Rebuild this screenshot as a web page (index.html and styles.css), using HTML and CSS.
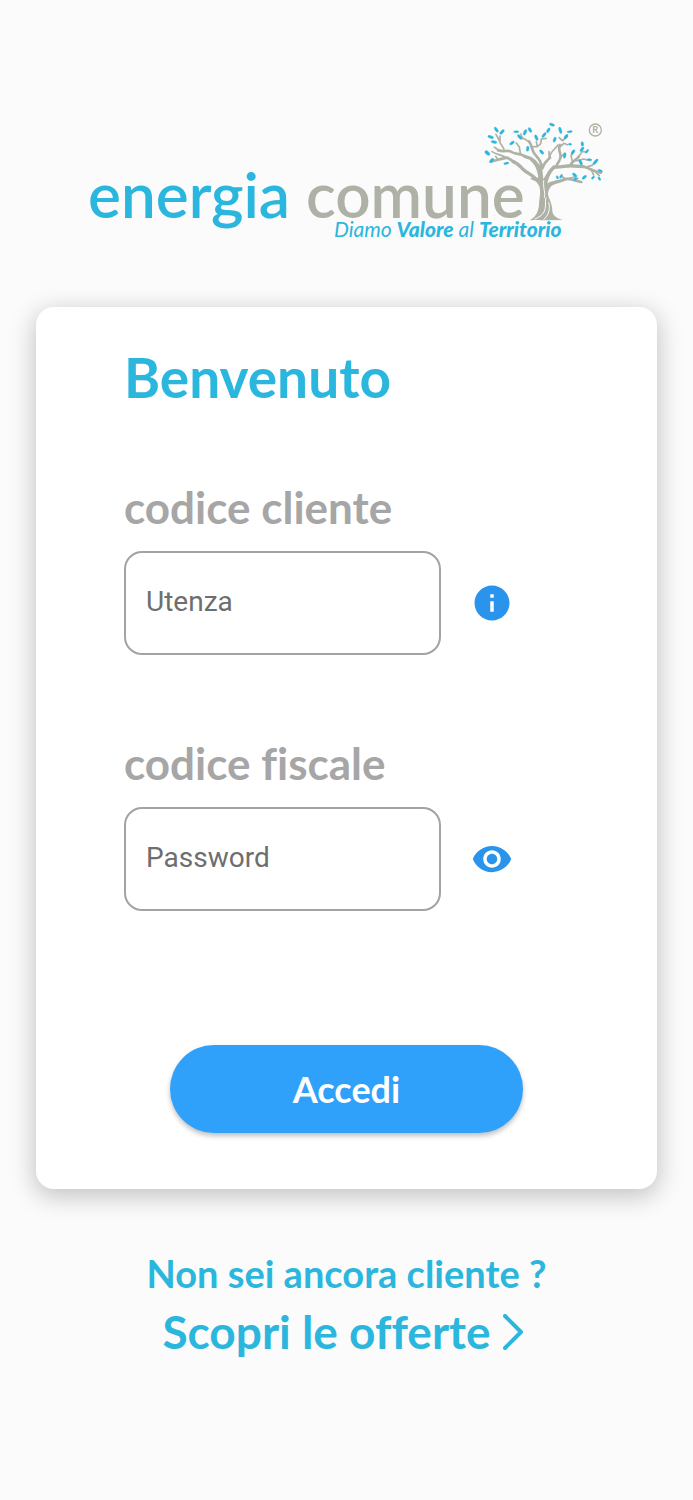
FILE: index.html
```html
<!DOCTYPE html>
<html lang="it">
<head>
  <meta charset="UTF-8" />
  <meta name="viewport" content="width=device-width, initial-scale=1.0"/>
  <title>Energia Comune - Accesso</title>
  <link rel="stylesheet" href="styles.css">
</head>
<body>

  <!-- Logo -->
  <header class="header">
    <svg class="logo" viewBox="0 0 514 120" role="img" aria-label="Energia Comune">
      <text class="logo-energia" x="-2" y="98">energia</text>
      <text class="logo-comune" x="216" y="98">comune</text>
      <text class="logo-tagline" x="244" y="117">Diamo <tspan class="strong">Valore</tspan> al <tspan class="strong">Territorio</tspan></text>

      <g transform="translate(380 -10) scale(.3333)">
        <!-- Trunk -->
        <path class="trunk" d="M179 331 C196 323 205 306 207 286 C208 262 214 246 207 226 C203 214 192 212 181 207 L184 203 C195 204 202 205 205 202 C202 180 196 165 180 150 L188 148 C202 158 211 170 217 179 L220 207 C229 196 235 176 249 168 L263 171 C244 181 237 200 232 221 C241 214 249 214 258 216 C240 228 234 241 234 254 C239 270 247 284 247 302 C248 318 261 325 280 330 L228 331 C215 331 205 328 179 331 Z"/>
        <path class="bark" d="M221 211 C219 238 227 246 223 263 M236 277 C242 298 235 316 221 329 M228 262 C224 280 230 292 222 306 C216 316 207 321 194 328"/>
        <!-- Branches -->
        <g class="branch">
          <path stroke-width="10" d="M209 221 C195 196 176 194 158 177 C147 165 142 159 129 155 M212 185 C204 157 187 144 164 139 M252 171 C278 173 290 164 312 168 L340 170 M237 227 C253 212 270 216 284 208"/>
          <path stroke-width="8" d="M164 139 C151 128 137 135 125 126 C115 118 104 128 84 121 M133 156 L112 143 L84 149 L62 155 M217 175 C222 157 232 151 240 143 M214 176 C216 155 205 145 194 132 C184 119 187 106 177 94 M258 171 C262 157 272 153 272 139 C270 122 263 115 270 105 M302 165 C306 151 320 151 326 140 M340 170 C358 173 368 185 393 188 M280 209 C296 200 310 213 334 216"/>
          <path stroke-width="5" d="M103 123 C102 108 91 107 89 93 L78 73 M90 95 L90 78 M86 120 L73 112 M105 141 C92 134 78 133 66 125 M84 149 L77 139 M151 130 L148 111 L139 99 M179 98 L166 88 L151 83 M182 109 C197 113 214 107 213 94 L214 87 L228 85 M202 110 L199 95 M240 143 C236 130 253 120 264 105 M238 146 L237 125 M269 111 L282 100 L292 104 M272 141 L285 129 M308 157 L303 137 L311 126 M326 141 L337 124 L348 126 M318 153 L341 147 L357 151 M346 172 L366 166 L372 160 M363 178 L371 195 M378 187 L388 197 M287 208 L276 199 M296 206 L314 201 M315 210 L324 205 M268 83 L276 91 L282 88 M278 92 L292 80 M152 72 L157 83"/>
        </g>
        <!-- Leaves -->
        <g class="leaves">
          <ellipse cx="79" cy="59" rx="9" ry="4" transform="rotate(55 79 59)"/>
          <ellipse cx="96" cy="66" rx="9" ry="4" transform="rotate(-45 96 66)"/>
          <ellipse cx="62" cy="81" rx="9" ry="4" transform="rotate(18 62 81)"/>
          <ellipse cx="72" cy="96" rx="9" ry="4" transform="rotate(8 72 96)"/>
          <ellipse cx="52" cy="129" rx="9" ry="5" transform="rotate(40 52 129)"/>
          <ellipse cx="65" cy="151" rx="8" ry="4" transform="rotate(-45 65 151)"/>
          <ellipse cx="109" cy="160" rx="8" ry="3" transform="rotate(-15 109 160)"/>
          <ellipse cx="126" cy="99" rx="8" ry="4" transform="rotate(-35 126 99)"/>
          <ellipse cx="139" cy="65" rx="8" ry="3"/>
          <ellipse cx="149" cy="81" rx="9" ry="4" transform="rotate(50 149 81)"/>
          <ellipse cx="165" cy="67" rx="9" ry="4" transform="rotate(-65 165 67)"/>
          <ellipse cx="180" cy="60" rx="8" ry="4" transform="rotate(60 180 60)"/>
          <ellipse cx="173" cy="116" rx="8" ry="4" transform="rotate(-85 173 116)"/>
          <ellipse cx="199" cy="83" rx="9" ry="4" transform="rotate(65 199 83)"/>
          <ellipse cx="222" cy="75" rx="9" ry="4" transform="rotate(-50 222 75)"/>
          <ellipse cx="235" cy="61" rx="8" ry="4" transform="rotate(-60 235 61)"/>
          <ellipse cx="246" cy="44" rx="8" ry="4" transform="rotate(20 246 44)"/>
          <ellipse cx="271" cy="61" rx="10" ry="4" transform="rotate(75 271 61)"/>
          <ellipse cx="299" cy="65" rx="8" ry="3" transform="rotate(-5 299 65)"/>
          <ellipse cx="288" cy="80" rx="8" ry="4" transform="rotate(-50 288 80)"/>
          <ellipse cx="254" cy="89" rx="8" ry="4" transform="rotate(-70 254 89)"/>
          <ellipse cx="215" cy="126" rx="8" ry="4" transform="rotate(45 215 126)"/>
          <ellipse cx="300" cy="103" rx="5" ry="3"/>
          <ellipse cx="284" cy="137" rx="8" ry="4" transform="rotate(-75 284 137)"/>
          <ellipse cx="309" cy="126" rx="8" ry="4" transform="rotate(-50 309 126)"/>
          <ellipse cx="337" cy="102" rx="7" ry="4" transform="rotate(80 337 102)"/>
          <ellipse cx="336" cy="118" rx="8" ry="4" transform="rotate(-50 336 118)"/>
          <ellipse cx="351" cy="124" rx="7" ry="3" transform="rotate(-50 351 124)"/>
          <ellipse cx="332" cy="157" rx="9" ry="4" transform="rotate(65 332 157)"/>
          <ellipse cx="359" cy="149" rx="7" ry="3" transform="rotate(10 359 149)"/>
          <ellipse cx="377" cy="155" rx="10" ry="4" transform="rotate(-50 377 155)"/>
          <ellipse cx="391" cy="182" rx="7" ry="3" transform="rotate(25 391 182)"/>
          <ellipse cx="369" cy="203" rx="6" ry="3" transform="rotate(-45 369 203)"/>
          <ellipse cx="388" cy="206" rx="6" ry="3" transform="rotate(55 388 206)"/>
          <ellipse cx="343" cy="202" rx="8" ry="4" transform="rotate(-40 343 202)"/>
          <ellipse cx="314" cy="195" rx="8" ry="4" transform="rotate(40 314 195)"/>
          <ellipse cx="316" cy="207" rx="6" ry="3" transform="rotate(-50 316 207)"/>
          <ellipse cx="273" cy="199" rx="7" ry="3" transform="rotate(-60 273 199)"/>
          <ellipse cx="262" cy="202" rx="5" ry="3" transform="rotate(70 262 202)"/>
        </g>
        <circle class="mark-ring" cx="376" cy="60" r="18"/>
        <text class="mark-letter" x="376" y="70">R</text>
      </g>
    </svg>
  </header>

  <!-- Login -->
  <main class="card">
    <h1 class="title">Benvenuto</h1>

    <form class="login-form">
      <div class="field">
        <label for="cliente">codice cliente</label>
        <div class="field-row">
          <input type="text" id="cliente" placeholder="Utenza" />
          <button type="button" class="icon-btn" aria-label="Informazioni">
            <svg viewBox="0 0 24 24"><path d="M12 2C6.48 2 2 6.48 2 12s4.48 10 10 10 10-4.48 10-10S17.52 2 12 2zm1 15h-2v-6h2v6zm0-8h-2V7h2v2z"/></svg>
          </button>
        </div>
      </div>

      <div class="field">
        <label for="fiscale">codice fiscale</label>
        <div class="field-row">
          <input type="password" id="fiscale" placeholder="Password" />
          <button type="button" class="icon-btn" id="toggle" aria-label="Mostra password">
            <svg viewBox="0 0 24 24"><path d="M12 4.500C7 4.500 2.730 7.610 1 12c1.730 4.390 6 7.500 11 7.500s9.270-3.110 11-7.500c-1.730-4.390-6-7.500-11-7.500zM12 17c-2.760 0-5-2.240-5-5s2.240-5 5-5 5 2.240 5 5-2.240 5-5 5zm0-8c-1.660 0-3 1.340-3 3s1.340 3 3 3 3-1.340 3-3-1.340-3-3-3z"/></svg>
          </button>
        </div>
      </div>

      <button type="submit" class="btn-login">Accedi</button>
    </form>
  </main>

  <!-- Offers -->
  <footer class="footer">
    <p>Non sei ancora cliente ?</p>
    <a href="#">Scopri le offerte
      <svg class="chevron" viewBox="0 0 20 36"><path d="M2 2 L18 18 L2 34"/></svg>
    </a>
  </footer>

  <script>
    document.getElementById("toggle").addEventListener("click", function() {
      const input = document.getElementById("fiscale");
      input.type = input.type === "password" ? "text" : "password";
    });
  </script>

</body>
</html>
```
FILE: styles.css
```css
* {
  margin: 0;
  padding: 0;
  box-sizing: border-box;
}

body {
  background: #fbfbfb;
  color: #2bb6dd;
  font-family: Lato, sans-serif;
  font-weight: bold;
  font-variant-ligatures: none;
  padding: 120px 36px 0;
}

.header {
  display: flex;
  justify-content: center;
  margin-bottom: 67px;
}

.logo {
  width: 100%;
  max-width: 514px;
  overflow: visible;
}

.logo-energia,
.logo-comune {
  font-size: 62px;
  font-weight: 600;
  fill: #2bb6dd;
}

.logo-comune {
  fill: #adb1a6;
}

.logo-tagline {
  font-size: 21px;
  font-style: italic;
  font-weight: normal;
  fill: #2bb6dd;
}

.logo-tagline .strong {
  font-weight: 900;
}

.trunk {
  fill: #adb1a6;
}

.bark {
  fill: none;
  stroke: #fbfbfb;
  stroke-width: 3;
}

.branch {
  fill: none;
  stroke: #adb1a6;
  stroke-linecap: round;
  stroke-linejoin: round;
}

.leaves {
  fill: #2bb6dd;
  stroke: #2bb6dd;
  stroke-width: 1;
}

.mark-ring {
  fill: none;
  stroke: #adb1a6;
  stroke-width: 4;
}

.mark-letter {
  font-size: 28px;
  text-anchor: middle;
  fill: #adb1a6;
}

.card {
  background: #fff;
  border-radius: 18px;
  padding: 38px 88px 56px;
  box-shadow: 0 6px 24px 2px rgba(0, 0, 0, 0.22);
}

.title {
  font-size: 55px;
  line-height: 64px;
  margin-bottom: 70px;
}

.login-form {
  display: flex;
  flex-direction: column;
}

.field {
  margin-bottom: 80px;
}

.field label {
  display: block;
  color: #a6a6a6;
  font-size: 44px;
  line-height: 56px;
  margin-bottom: 16px;
}

.field-row {
  display: flex;
  align-items: center;
  gap: 30px;
}

.field-row input {
  flex: 0 1 317px;
  min-width: 0;
  height: 104px;
  padding: 0 20px 4px;
  border: 2px solid #a3a3a3;
  border-radius: 18px;
  background: #fff;
  color: #333;
  font-family: Roboto, sans-serif;
  font-size: 28px;
}

.field-row input::placeholder {
  color: #6e6e6e;
}

.icon-btn {
  flex: none;
  width: 42px;
  height: 42px;
  border: none;
  background: none;
  cursor: pointer;
}

.icon-btn svg {
  display: block;
  fill: #2a94ec;
}

.btn-login {
  align-self: center;
  width: 100%;
  max-width: 353px;
  height: 88px;
  margin-top: 54px;
  border: none;
  border-radius: 44px;
  background: #30a1fb;
  color: #fff;
  font-family: inherit;
  font-size: 36px;
  font-weight: bold;
  box-shadow: 0 3px 5px rgba(0, 0, 0, 0.25);
  cursor: pointer;
}

.footer {
  padding: 60px 0 40px;
  text-align: center;
}

.footer p {
  font-size: 38px;
  line-height: 48px;
}

.footer a {
  display: flex;
  justify-content: center;
  align-items: center;
  gap: 12px;
  padding-right: 8px;
  color: inherit;
  font-size: 46px;
  line-height: 70px;
  text-decoration: none;
}

.chevron {
  width: 20px;
  height: 36px;
  fill: none;
  stroke: #2bb6dd;
  stroke-width: 4;
  stroke-linecap: round;
  stroke-linejoin: round;
}
```
